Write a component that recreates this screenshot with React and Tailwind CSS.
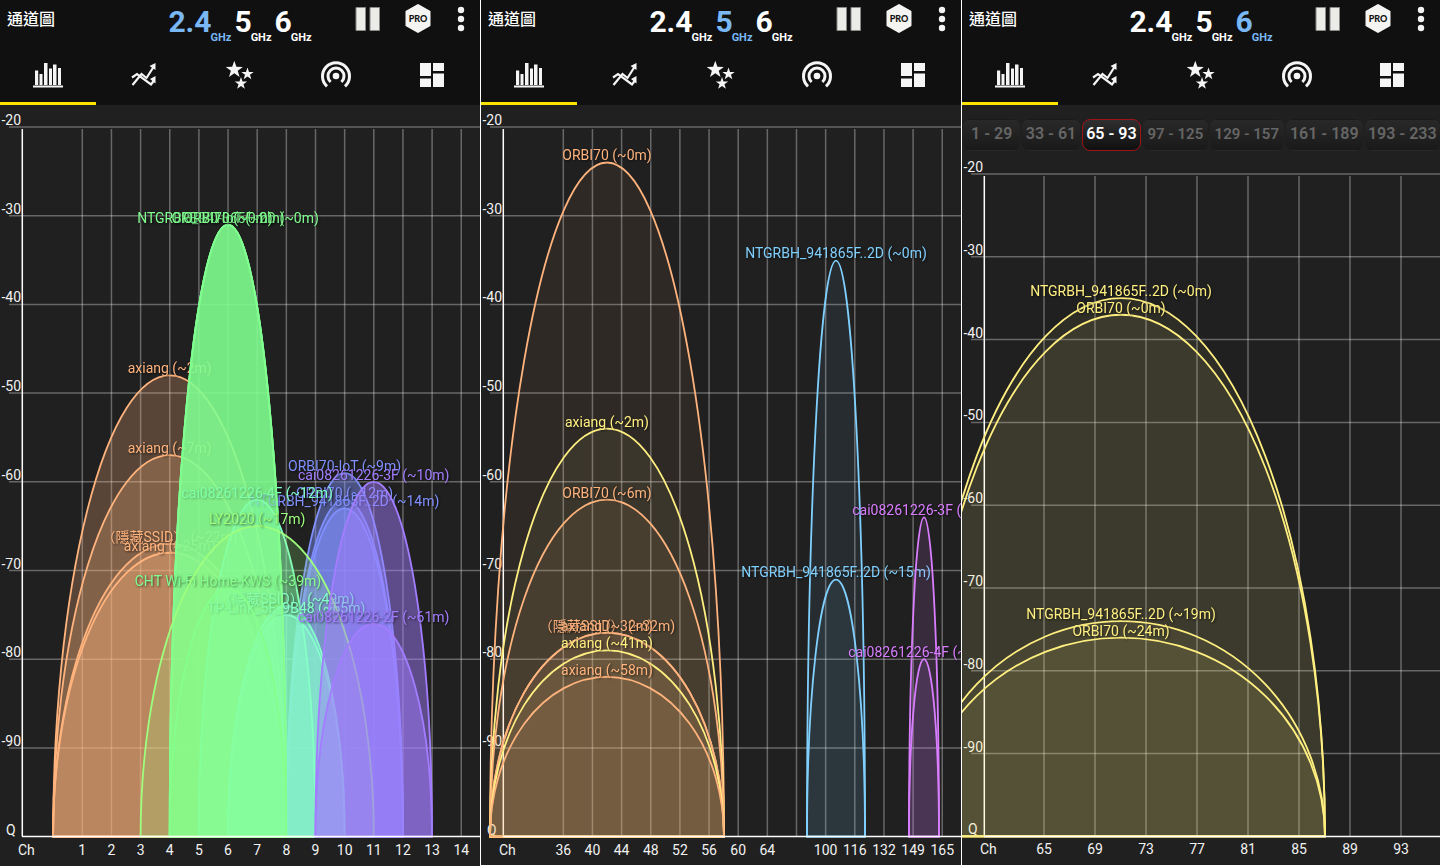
import { useState } from "react";

const ORANGE = "#ffb37d";
const YELLOW = "#ffef80";
const LIME = "#9dff7d";
const GREEN = "#80ff90";
const TEAL = "#80ffc4";
const AQUA = "#80ffe0";
const BLUE = "#8090ff";
const VIOLET = "#a37dff";
const SKY = "#80d0ff";
const PINK = "#d97dff";

const range = (count, start, step) =>
  Array.from({ length: count }, (_, i) => start + i * step);

// Networks are painted in list order, so the last one ends up on top
const charts = [
  {
    band: "2.4",
    width: 480,
    height: 761,
    top: 22,
    step: 88.7,
    xs: range(14, 82.3, 29.15),
    xLabels: ["1", "2", "3", "4", "5", "6", "7", "8", "9", "10", "11", "12", "13", "14"],
    networks: [
      { name: "axiang (~2m)", x: 169.7, rx: 116.6, level: -48, color: ORANGE, fill: 0.255 },
      { name: "axiang (~7m)", x: 169.7, rx: 116.6, level: -57, color: ORANGE, fill: 0.255 },
      { name: "（隱藏SSID） (~22m)", x: 169.7, rx: 116.6, level: -67, color: ORANGE, fill: 0.255 },
      { name: "axiang (~25m)", x: 169.7, rx: 116.6, level: -68, color: ORANGE, fill: 0.255 },
      { name: "NTGRBH_941865F..2D (~0m)", x: 228, rx: 58.3, level: -31, color: GREEN, fill: 0.52 },
      { name: "ORBI70-IoT (~0m)", x: 228, rx: 58.3, level: -31, color: GREEN, fill: 0.52 },
      { name: "ORBI70-IoT (~9m)", x: 344.6, rx: 58.3, level: -59, color: BLUE, fill: 0.45 },
      { name: "ORBI70 (~12m)", x: 344.6, rx: 58.3, level: -62, color: BLUE, fill: 0.45 },
      { name: "NTGRBH_941865F..2D (~14m)", x: 344.6, rx: 58.3, level: -63, color: BLUE, fill: 0.45 },
      { name: "cai08261226-4F (~12m)", x: 257.2, rx: 58.3, level: -62, color: TEAL, fill: 0.45 },
      { name: "（隱藏SSID） (~49m)", x: 286.3, rx: 58.3, level: -74, color: AQUA, fill: 0.45 },
      { name: "TP-Link_5F_9B48 (~65m)", x: 286.3, rx: 58.3, level: -75, color: AQUA, fill: 0.45 },
      { name: "ORBI70 (~0m)", x: 228, rx: 58.3, level: -31, color: GREEN, fill: 0.52 },
      { name: "CHT Wi-Fi Home-KWS (~39m)", x: 228, rx: 58.3, level: -72, color: GREEN, fill: 0.25 },
      { name: "LY2020 (~17m)", x: 257.2, rx: 116.6, level: -65, color: LIME, fill: 0.2 },
      { name: "cai08261226-3F (~10m)", x: 373.7, rx: 58.3, level: -60, color: VIOLET, fill: 0.48 },
      { name: "cai08261226-2F (~61m)", x: 373.7, rx: 58.3, level: -76, color: VIOLET, fill: 0.48 },
    ],
  },
  {
    band: "5",
    width: 480,
    height: 760,
    top: 22,
    step: 88.7,
    xs: range(14, 82.3, 29.15),
    xLabels: ["36", "40", "44", "48", "52", "56", "60", "64", "", "100", "116", "132", "149", "165"],
    networks: [
      { name: "ORBI70 (~0m)", x: 126, rx: 117, level: -24, color: ORANGE, fill: 0.065 },
      { name: "axiang (~2m)", x: 126, rx: 117, level: -54, color: YELLOW, fill: 0.065 },
      { name: "ORBI70 (~6m)", x: 126, rx: 117, level: -62, color: ORANGE, fill: 0.065 },
      { name: "（隱藏SSID） (~32m)", x: 126, rx: 117, level: -77, color: ORANGE, fill: 0.065 },
      { name: "axiang (~32m)", x: 126, rx: 117, level: -77, color: ORANGE, fill: 0.065 },
      { name: "axiang (~41m)", x: 126, rx: 117, level: -79, color: YELLOW, fill: 0.065 },
      { name: "axiang (~58m)", x: 126, rx: 117, level: -82, color: ORANGE, fill: 0.065 },
      { name: "NTGRBH_941865F..2D (~0m)", x: 355, rx: 29, level: -35, color: SKY, fill: 0.07 },
      { name: "NTGRBH_941865F..2D (~15m)", x: 355, rx: 29, level: -71, color: SKY, fill: 0.07 },
      { name: "cai08261226-3F (~7m)", x: 443, rx: 15, level: -64, color: PINK, fill: 0.13 },
      { name: "cai08261226-4F (~45m)", x: 443, rx: 15, level: -80, color: PINK, fill: 0.13 },
    ],
  },
  {
    band: "6",
    width: 478,
    height: 714,
    top: 23,
    step: 82.8,
    xs: range(8, 82, 51),
    xLabels: ["65", "69", "73", "77", "81", "85", "89", "93"],
    ranges: ["1 - 29", "33 - 61", "65 - 93", "97 - 125", "129 - 157", "161 - 189", "193 - 233"],
    networks: [
      { name: "NTGRBH_941865F..2D (~0m)", x: 159, rx: 204, level: -35, color: YELLOW, fill: 0.065 },
      { name: "ORBI70 (~0m)", x: 159, rx: 204, level: -37, color: YELLOW, fill: 0.065 },
      { name: "NTGRBH_941865F..2D (~19m)", x: 159, rx: 204, level: -74, color: YELLOW, fill: 0.065 },
      { name: "ORBI70 (~24m)", x: 159, rx: 204, level: -76, color: YELLOW, fill: 0.065 },
    ],
  },
];

const starPoints = (cx, cy, r) =>
  Array.from({ length: 10 }, (_, i) => {
    const radius = i % 2 === 0 ? r : r * 0.4;
    const angle = (Math.PI / 5) * i - Math.PI / 2;
    return `${cx + radius * Math.cos(angle)},${cy + radius * Math.sin(angle)}`;
  }).join(" ");

const BarsIcon = () => (
  <svg width="30" height="26" viewBox="0 0 30 26" fill="currentColor">
    <path d="M2 8.500h3.200V23H2zM6.500 12h3v11h-3zM11 1h3.500v22H11zM16 6.500h3V23h-3zM20 2.500h3.500V23H20zM25 6h3v17h-3zM0 23.500h30v2H0z" />
  </svg>
);

const TrendIcon = () => (
  <svg width="26" height="26" viewBox="0 0 26 26" fill="none" stroke="currentColor" strokeWidth="2.200">
    <path d="M1.500 23L10.500 12l5 4L22.500 5" />
    <path d="M1 15.500l5-3.500 14 10.500 3-4" />
    <path d="M24.500 1v7L18.500 4zM24.500 14v7.500L19 17z" fill="currentColor" stroke="none" />
  </svg>
);

const StarsIcon = () => (
  <svg width="30" height="30" viewBox="0 0 30 30" fill="currentColor">
    <polygon points={starPoints(9.3, 9.7, 9)} />
    <polygon points={starPoints(22.5, 14, 6.5)} />
    <polygon points={starPoints(16, 23.5, 6.5)} />
  </svg>
);

const RadarIcon = () => (
  <svg width="32" height="32" viewBox="0 0 32 32" fill="none" stroke="currentColor" strokeWidth="3">
    <path d="M7 27.300A13.500 13.500 0 1 1 25 27.300" />
    <path d="M10.600 23A8 8 0 1 1 21.400 23" />
    <circle cx="16" cy="17" r="3.300" fill="currentColor" stroke="none" />
  </svg>
);

const DashboardIcon = () => (
  <svg width="24" height="24" viewBox="0 0 24 24" fill="currentColor">
    <path d="M0 0h11v13H0zM0 15.500h11V24H0zM13 0h11v8H13zM13 10.500h11V24H13z" />
  </svg>
);

const tabs = [
  { id: "channels", label: "Channel graph", Icon: BarsIcon },
  { id: "signal", label: "Signal over time", Icon: TrendIcon },
  { id: "rating", label: "Channel rating", Icon: StarsIcon },
  { id: "meter", label: "Signal meter", Icon: RadarIcon },
  { id: "dashboard", label: "Dashboard", Icon: DashboardIcon },
];

const Toolbar = ({ band }) => {
  const [active, setActive] = useState(band);

  return (
    <div className="grid h-[50px] grid-cols-[1fr_auto_1fr] items-start">
      <h1 className="pt-[10px] pl-[7px] text-base leading-5 font-medium">通道圖</h1>
      <div className="flex gap-[3px] pt-[7px]">
        {["2.4", "5", "6"].map((value) => (
          <button
            key={value}
            onClick={() => setActive(value)}
            className={`flex items-end font-bold ${
              active === value ? "text-[#7ab8f5]" : "text-white"
            }`}
          >
            <span className="pb-[6px] text-[30px] leading-[30px]">{value}</span>
            <span className="-ml-px text-[11px] leading-[11px]">GHz</span>
          </button>
        ))}
      </div>
      <div className="flex items-start justify-end pt-1 pr-[15px]">
        <button aria-label="Pause" className="mt-[3px] mr-6">
          <svg width="26" height="25" viewBox="0 0 26 25" fill="#ebebe8" stroke="#8a8a88">
            <path d="M1 .5h9.500v23H1zM15 .5h9.500v23H15z" />
          </svg>
        </button>
        <button aria-label="Pro version" className="mr-[26px]">
          <svg width="26" height="29" viewBox="0 0 26 29">
            <path
              d="M13 1l11.500 6.500v14L13 28 1.500 21.500v-14z"
              fill="#f4f4f2"
              stroke="#f4f4f2"
              strokeWidth="2"
              strokeLinejoin="round"
            />
            <text
              x="13"
              y="18"
              textAnchor="middle"
              fill="#111"
              className="font-[Lato] text-[9px] font-black"
            >
              PRO
            </text>
          </svg>
        </button>
        <button aria-label="More" className="mt-[2px]">
          <svg width="8" height="26" viewBox="0 0 8 26" fill="#f4f4f4">
            <circle cx="4" cy="4" r="3.200" />
            <circle cx="4" cy="13" r="3.200" />
            <circle cx="4" cy="22" r="3.200" />
          </svg>
        </button>
      </div>
    </div>
  );
};

const TabBar = () => {
  const [active, setActive] = useState("channels");

  return (
    <nav className="grid h-[55px] grid-cols-5 text-[#f5f5f5]">
      {tabs.map(({ id, label, Icon }) => (
        <button
          key={id}
          aria-label={label}
          onClick={() => setActive(id)}
          className={`flex items-center justify-center border-b-3 pb-[2px] ${
            active === id ? "border-[#fbe400]" : "border-transparent"
          }`}
        >
          <Icon />
        </button>
      ))}
    </nav>
  );
};

const RangePicker = ({ ranges }) => {
  const [selected, setSelected] = useState("65 - 93");

  return (
    <div className="grid grid-cols-[57fr_57fr_59fr_64fr_74fr_76fr_75fr] gap-[2px] pt-[14px] pl-px">
      {ranges.map((item) => (
        <button
          key={item}
          onClick={() => setSelected(item)}
          className={`h-8 rounded-lg border bg-linear-to-b pb-[2px] text-center leading-7 font-semibold whitespace-nowrap ${
            item === "97 - 125" || item === "129 - 157" ? "text-[15px]" : "text-base"
          } ${
            selected === item
              ? "border-[#9c1418] from-[#303030] to-[#101010] text-white"
              : "border-transparent from-[#292929] to-[#1a1a1a] text-[#666]"
          }`}
        >
          {item}
        </button>
      ))}
    </div>
  );
};

const ChannelChart = ({ chart }) => {
  const { width, height, top, step, xs, xLabels, networks } = chart;
  const base = top + step * 8;
  const levelToY = (level) => top + ((-20 - level) / 10) * step;

  return (
    <svg viewBox={`0 0 ${width} ${height}`} className="block w-full text-sm">
      {/* GRID */}
      <g stroke="#fff" strokeOpacity="0.32" strokeWidth="1.500">
        {range(8, -20, -10).map((level) => (
          <line key={level} x1="9" x2={width} y1={levelToY(level)} y2={levelToY(level)} />
        ))}
        {xs.map((x) => (
          <line key={x} x1={x} x2={x} y1={top + 2} y2={base} />
        ))}
      </g>
      <g fill="#f2f2f2">
        {range(8, -20, -10).map((level) => (
          <text key={level} x="21" y={levelToY(level) - 2} textAnchor="end">
            {level}
          </text>
        ))}
        <text x="6" y={base - 2}>Q</text>
        <text x="18" y={base + 18}>Ch</text>
        {xs.map((x, index) => (
          <text key={x} x={x} y={base + 18} textAnchor="middle">
            {xLabels[index]}
          </text>
        ))}
      </g>
      <line x1="22.300" x2="22.300" y1={top + 2} y2={base} stroke="#fff" strokeWidth="1.500" />

      {/* NETWORKS */}
      {networks.map(({ name, x, rx, level, color, fill }) => {
        const y = levelToY(level);
        return (
          <g key={name + level}>
            <path
              d={`M${x - rx} ${base}A${rx} ${base - y} 0 0 1 ${x + rx} ${base}Z`}
              fill={color}
              fillOpacity={fill}
              stroke={color}
              strokeWidth="1.800"
            />
            <text
              x={x}
              y={y - 2}
              textAnchor="middle"
              fill={color}
              className="drop-shadow-[1px_1px_1px_rgba(0,0,0,0.6)]"
            >
              {name}
            </text>
          </g>
        );
      })}
      <line x1="22" x2={width} y1={base} y2={base} stroke="#fff" strokeWidth="1.500" />
    </svg>
  );
};

const Panel = ({ chart, className }) => (
  <section className={`min-w-0 bg-[#202020] ${className}`}>
    <header className="bg-[#101010]">
      <Toolbar band={chart.band} />
      <TabBar />
    </header>
    {chart.ranges && <RangePicker ranges={chart.ranges} />}
    <ChannelChart chart={chart} />
  </section>
);

const App = () => {
  return (
    <main className="grid min-h-screen grid-cols-[480fr_481fr_479fr] items-start bg-white font-[Roboto,'Noto_Sans_CJK_TC',sans-serif] text-white">
      {charts.map((chart, index) => (
        <Panel
          key={chart.band}
          chart={chart}
          className={index > 0 ? "border-l border-white" : ""}
        />
      ))}
    </main>
  );
};

export default App;
